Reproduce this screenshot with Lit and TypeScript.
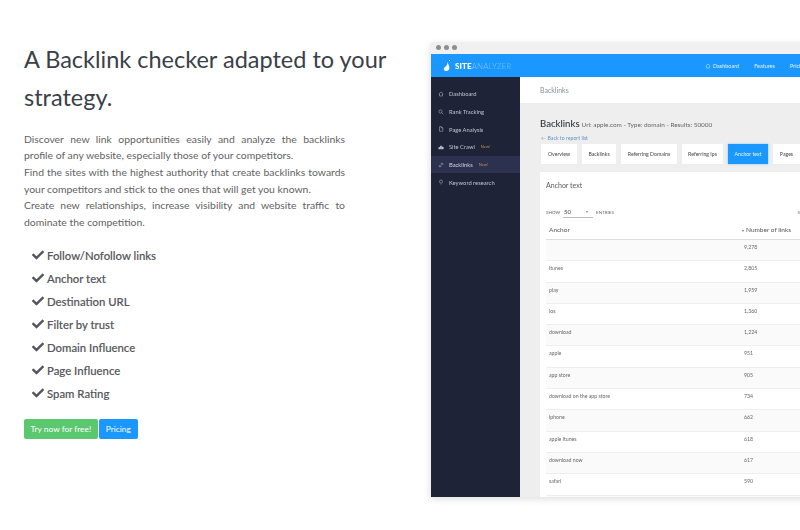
import { LitElement, html, css, svg } from "lit";
import { customElement } from "lit/decorators.js";

const CHECK = "M173.898 439.404l-166.4-166.4c-9.997-9.997-9.997-26.206 0-36.204l36.203-36.204c9.997-9.998 26.207-9.998 36.204 0L192 312.69 432.095 72.596c9.997-9.997 26.207-9.997 36.204 0l36.203 36.204c9.997 9.997 9.997 26.206 0 36.204l-294.4 294.401c-9.998 9.997-26.207 9.997-36.204-.001z";

const features = ["Follow/Nofollow links", "Anchor text", "Destination URL", "Filter by trust", "Domain Influence", "Page Influence", "Spam Rating"];
const tabs = ["Overview", "Backlinks", "Referring Domains", "Referring Ips", "Anchor text", "Pages"];
const rows: [string, string][] = [["", "9,278"], ["itunes", "2,805"], ["play", "1,959"], ["ios", "1,360"], ["download", "1,224"], ["apple", "951"], ["app store", "905"], ["download on the app store", "734"], ["iphone", "662"], ["apple itunes", "618"], ["download now", "617"], ["safari", "590"], ["", ""]];

const sideIcons: Record<string, unknown> = {
  home: svg`<path d="M1.500 6 6 2l4.500 4M3 5.500V10h6V5.500"/>`,
  search: svg`<circle cx="5" cy="5" r="3.200"/><path d="m7.500 7.500 3 3"/>`,
  page: svg`<path d="M3 1.500h4l2.500 2.500v6.500H3zM7 1.500V4h2.500"/>`,
  crawl: svg`<path d="M1.500 10V7h2.500v3zM4.500 10V4h3v6zM8 10V6h2.500v4z" fill="currentColor"/>`,
  link: svg`<path d="M5 7l2-2M4 5.500 2.500 7a1.800 1.800 0 0 0 2.500 2.500L6.500 8M5.500 4 7 2.500A1.800 1.800 0 0 1 9.500 5L8 6.500"/>`,
  bulb: svg`<path d="M4.500 8C3.500 7 3 6.300 3 5a3 3 0 0 1 6 0c0 1.300-.5 2-1.500 3zM5 10h2"/>`,
};
const sideItems: [string, string, boolean, boolean][] = [["home", "Dashboard", false, false], ["search", "Rank Tracking", false, false], ["page", "Page Analysis", false, false], ["crawl", "Site Crawl", true, false], ["link", "Backlinks", true, true], ["bulb", "Keyword research", false, false]];

@customElement("app-root")
export class AppRoot extends LitElement {
  static styles = css`
    :host { display: block; width: 800px; height: 530px; overflow: hidden; background: #fff; font-family: Lato, "Liberation Sans", sans-serif; color: #4a4a4a; }
    * { box-sizing: border-box; }
    .page { display: flex; height: 530px; width: 1100px; }
    .intro { width: 430px; flex: none; padding: 39.500px 0 0 24px; }
    h1 { margin: 0; width: 380px; font-size: 23.500px; line-height: 38.500px; font-weight: 400; color: #3a3f48; }
    .lede { margin: 14px 0 0; width: 321px; font-size: 10.400px; line-height: 16.700px; color: #626262; }
    .lede span { display: block; text-align: left; white-space: nowrap; }
    .lede .fill { white-space: normal; text-align: justify; text-align-last: justify; }
    ul { list-style: none; margin: 13px 0 0; padding: 0 0 0 8px; }
    li { display: flex; align-items: center; gap: 3px; height: 23px; font-size: 11.350px; font-weight: 500; color: #54565b; -webkit-text-stroke: 0.15px #54565b; }
    li svg { width: 12px; height: 12px; fill: #54565b; flex: none; }
    .cta { display: flex; gap: 1px; margin-top: 14px; }
    .btn { height: 20px; display: flex; align-items: center; padding: 0 6.500px; border-radius: 2px; color: #fff; font-size: 8.400px; }
    .green { background: #5bc870; }
    .blue { background: #1a98ff; padding: 0 7px; }
    .shot { width: 520px; height: 455px; margin-top: 42px; flex: none; background: #f0f0f0; border-radius: 4px 0 0 0; box-shadow: 0 2px 7px rgba(0,0,0,.13); overflow: hidden; display: flex; flex-direction: column; padding-left: 1px; filter: blur(.6px); }
    .chrome { height: 12px; display: flex; align-items: center; gap: 3px; padding: 0 0 2px 5px; flex: none; }
    .chrome i { width: 5px; height: 5px; border-radius: 50%; background: #8e8e8e; }
    .nav { height: 23px; flex: none; background: #1a98ff; display: flex; align-items: center; color: #fff; font-size: 5.500px; padding-left: 12px; }
    .logo { display: flex; align-items: center; font-size: 8px; width: 262px; letter-spacing: .1px; }
    .logo svg { width: 9px; height: 14px; margin-right: 3px; fill: #fff; }
    .logo b { font-weight: 900; }
    .logo span { color: #7cc6ff; font-weight: 300; }
    .links { display: flex; gap: 15px; align-items: center; }
    .links span { display: flex; align-items: center; gap: 2px; color: #e4f3ff; }
    .links svg { width: 6px; height: 6px; fill: none; stroke: #d7edff; stroke-width: 1; }
    .body { flex: 1; display: flex; min-height: 0; }
    .side { width: 89px; flex: none; background: #1f2338; padding-top: 8px; color: #c0c2cc; font-size: 5.800px; }
    .sitem { height: 17.700px; display: flex; align-items: center; gap: 5px; padding-left: 7px; white-space: nowrap; }
    .sitem.on { background: #2c3150; color: #d0d2dc; }
    .sitem svg { width: 6px; height: 6px; fill: none; stroke: currentColor; stroke-width: 1; flex: none; }
    .sitem em { font-style: normal; font-size: 4px; color: #c4904a; margin-left: 1px; }
    .main { flex: 1; background: #eee; min-width: 0; }
    .crumb { height: 26px; background: #fff; display: flex; align-items: center; padding-left: 20px; font-size: 7px; color: #8a8f98; }
    .title { display: flex; align-items: baseline; gap: 2px; margin: 15px 0 0 20px; color: #2f3237; font-size: 9.600px; font-weight: 500; height: 14px; }
    .title small { font-size: 6.400px; font-weight: 400; color: #666; }
    .back { margin: 3px 0 0 21px; font-size: 5.200px; color: #5f96c8; height: 7px; line-height: 7px; }
    .tabs { display: flex; gap: 5px; margin: 2px 0 0 21px; }
    .tab { height: 20px; background: #fff; display: flex; align-items: center; justify-content: center; font-size: 5.200px; color: #444; white-space: nowrap; }
    .tab.on { background: #1a98ff; color: #eef8ff; box-shadow: 0 0 2px rgba(26,152,255,.5); }
    .card { margin: 8px 0 0 20px; background: #fff; padding: 8px 6px 0; height: 400px; width: 282px; }
    .card h2 { margin: 0; font-size: 7px; font-weight: 400; color: #5a5a5a; line-height: 10px; white-space: nowrap; }
    .show { display: flex; align-items: center; margin-top: 16px; gap: 2px; height: 12px; font-size: 4.500px; color: #666; white-space: nowrap; }
    .search { margin-left: auto; }
    .sel { width: 30px; height: 12px; display: flex; justify-content: space-between; align-items: center; border-bottom: 1px solid #bbb; font-size: 6px; color: #444; padding: 0 5px 0 1px; margin: 0 1px; }
    .sel::after { content: ""; border: 1.500px solid transparent; border-top: 2px solid #888; margin-top: 2px; }
    .thead, .row { display: grid; grid-template-columns: 195px 70px; padding-left: 3px; white-space: nowrap; }
    .thead { height: 21px; align-items: center; font-size: 6.500px; color: #555; border-bottom: 1px solid #ddd; margin-top: 1px; }
    .thead .n { margin-left: -2px; }
    .thead .n::before { content: ""; display: inline-block; border: 1.500px solid transparent; border-top: 2.500px solid #b5651d; margin-right: 2px; vertical-align: -1px; }
    .row { height: 21.300px; padding-top: 3px; font-size: 5.200px; line-height: 8px; color: #666; border-bottom: 1px solid #eee; }
    .row:nth-child(odd) { background: #fafafa; }
  `;

  render() {
    const tabW = [36, 34, 56, 41, 40, 27];
    return html`<div class="page">
      <section class="intro">
        <h1>A Backlink checker adapted to your strategy.</h1>
        <p class="lede">
          <span class="fill">Discover new link opportunities easily and analyze the backlinks</span>
          <span>profile of any website, especially those of your competitors.</span>
          <span class="fill">Find the sites with the highest authority that create backlinks towards</span>
          <span>your competitors and stick to the ones that will get you known.</span>
          <span class="fill">Create new relationships, increase visibility and website traffic to</span>
          <span>dominate the competition.</span>
        </p>
        <ul>
          ${features.map((f) => html`<li><svg viewBox="0 0 512 512"><path d=${CHECK}></path></svg>${f}</li>`)}
        </ul>
        <div class="cta"><span class="btn green">Try now for free!</span><span class="btn blue">Pricing</span></div>
      </section>
      <section class="shot">
        <div class="chrome"><i></i><i></i><i></i></div>
        <div class="nav">
          <div class="logo"><svg viewBox="0 0 9 14"><path d="M6 1h1v1H6zM4.500 3 6 7c1 2 0 5-2.500 5S0 10 1.500 8.500 4 7.500 4.500 3z"></path></svg><b>SITE</b><span>ANALYZER</span></div>
          <div class="links">
            <span><svg viewBox="0 0 12 12">${sideIcons.home}</svg>Dashboard</span><span>Features</span><span>Pricing</span>
          </div>
        </div>
        <div class="body">
          <aside class="side">
            ${sideItems.map(([i, t, n, on]) => html`<div class="sitem ${on ? "on" : ""}"><svg viewBox="0 0 12 12">${sideIcons[i]}</svg>${t}${n ? html`<em>New!</em>` : ""}</div>`)}
          </aside>
          <div class="main">
            <div class="crumb">Backlinks</div>
            <div class="title">Backlinks <small>Url: apple.com - Type: domain - Results: 50000</small></div>
            <div class="back">← Back to report list</div>
            <div class="tabs">${tabs.map((t, i) => html`<div class="tab ${t === "Anchor text" ? "on" : ""}" style="width:${tabW[i]}px">${t}</div>`)}</div>
            <div class="card">
              <h2>Anchor text</h2>
              <div class="show">SHOW <span class="sel">50</span> ENTRIES <span class="search">SEARCH:</span></div>
              <div class="thead"><span>Anchor</span><span class="n">Number of links</span></div>
              <div>${rows.map(([a, n]) => html`<div class="row"><span>${a}</span><span>${n}</span></div>`)}</div>
            </div>
          </div>
        </div>
      </section>
    </div>`;
  }
}
